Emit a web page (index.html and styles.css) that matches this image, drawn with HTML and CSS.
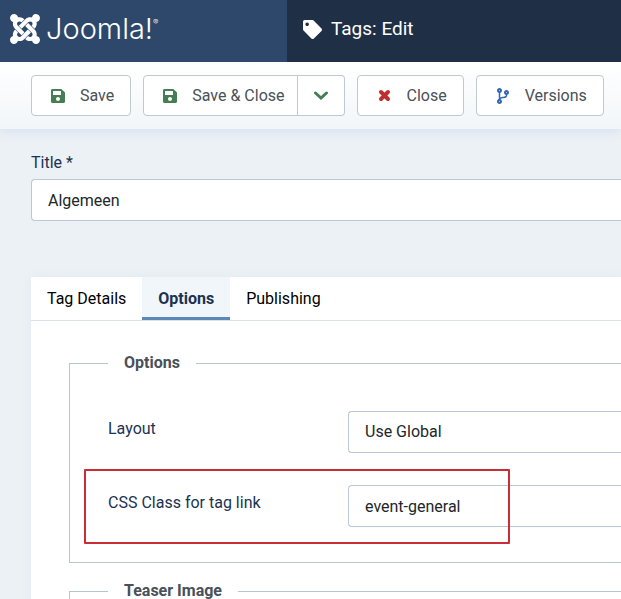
FILE: index.html
```html
<!DOCTYPE html>
<html lang="en">
<head>
<meta charset="utf-8">
<meta name="viewport" content="width=device-width, initial-scale=1">
<title>Tags: Edit</title>
<link rel="stylesheet" href="styles.css">
</head>
<body>
<div class="page">
  <header class="header">
    <a class="brand" href="#">
      <svg class="brand-mark" viewBox="0 32 448 448" aria-hidden="true"><path d="M.6 92.1C.6 58.8 27.4 32 60.4 32c30 0 54.5 21.9 59.2 50.2 32.6-7.6 67.1.6 96.5 30l-44.3 44.3c-20.5-20.5-42.6-16.3-55.4-3.5-14.3 14.3-14.3 37.9 0 52.2l99.5 99.5-44 44.3c-87.7-87.2-49.7-49.7-99.8-99.7-26.8-26.5-35-64.8-24.8-98.9C20.4 144.6.6 120.7.6 92.1zm129.5 116.4l44.3 44.3c10-10 89.7-89.7 99.7-99.8 14.3-14.3 37.6-14.3 51.9 0 12.8 12.8 17 35-3.5 55.4l44 44.3c31.2-31.2 38.5-67.6 28.9-101.2 29.2-4.1 51.9-29.2 51.9-59.5 0-33.2-26.8-60.1-59.8-60.1-30.3 0-55.4 22.5-59.5 51.6-33.8-9.9-71.7-1.5-98.3 25.1-18.3 19.1-71.1 71.5-99.6 99.9zm266.3 152.2c8.2-32.7-.9-68.5-26.3-93.9-11.8-12.2 5 4.7-99.5-99.7l-44.3 44.3 99.7 99.7c14.3 14.3 14.3 37.6 0 51.9-12.8 12.8-35 17-55.4-3.5l-44 44.3c27.6 30.2 68 38.8 102.7 28 5.5 27.4 29.7 48.1 58.9 48.1 33 0 59.8-26.8 59.8-60.1 0-30.2-22.5-55-51.6-59.1zm-84.3-53.1l-44-44.3c-87 86.4-50.4 50.4-99.7 99.8-14.3 14.3-37.6 14.3-51.9 0-13.1-13.4-16.9-35.3 3.2-55.4l-44-44.3c-30.2 30.2-38 65.2-29.5 98.3-26.7 6-46.2 29.9-46.2 58.2C0 453.2 26.8 480 59.8 480c28.6 0 52.5-19.8 58.6-46.7 32.7 8.2 68.5-.6 94.2-26 32.1-32 12.2-12.4 99.5-99.7z"/></svg>
      <span class="brand-name">Joomla!<span class="brand-reg">®</span></span>
    </a>
    <h1 class="page-title">
      <svg class="title-icon" viewBox="0 0 512 512" aria-hidden="true"><path d="M0 252.118V48C0 21.49 21.49 0 48 0h204.118a48 48 0 0 1 33.941 14.059l211.882 211.882c18.745 18.745 18.745 49.137 0 67.882L293.823 497.941c-18.745 18.745-49.137 18.745-67.882 0L14.059 286.059A48 48 0 0 1 0 252.118zM112 64c-26.51 0-48 21.49-48 48s21.49 48 48 48 48-21.49 48-48-21.49-48-48-48z"/></svg>
      Tags: Edit
    </h1>
  </header>

  <div class="toolbar" role="toolbar" aria-label="Actions">
    <button type="button" class="btn">
      <svg class="icon icon-save" viewBox="0 32 448 448" aria-hidden="true"><path d="M433.941 129.941l-83.882-83.882A48 48 0 0 0 316.118 32H48C21.49 32 0 53.49 0 80v352c0 26.51 21.49 48 48 48h352c26.51 0 48-21.49 48-48V163.882a48 48 0 0 0-14.059-33.941zM224 416c-35.346 0-64-28.654-64-64 0-35.346 28.654-64 64-64s64 28.654 64 64c0 35.346-28.654 64-64 64zm96-304.52V212c0 6.627-5.373 12-12 12H76c-6.627 0-12-5.373-12-12V108c0-6.627 5.373-12 12-12h228.52c3.183 0 6.235 1.264 8.485 3.515l3.48 3.48A11.996 11.996 0 0 1 320 111.48z"/></svg>
      Save
    </button>
    <div class="btn-group">
      <button type="button" class="btn">
        <svg class="icon icon-save" viewBox="0 32 448 448" aria-hidden="true"><path d="M433.941 129.941l-83.882-83.882A48 48 0 0 0 316.118 32H48C21.49 32 0 53.49 0 80v352c0 26.51 21.49 48 48 48h352c26.51 0 48-21.49 48-48V163.882a48 48 0 0 0-14.059-33.941zM224 416c-35.346 0-64-28.654-64-64 0-35.346 28.654-64 64-64s64 28.654 64 64c0 35.346-28.654 64-64 64zm96-304.52V212c0 6.627-5.373 12-12 12H76c-6.627 0-12-5.373-12-12V108c0-6.627 5.373-12 12-12h228.52c3.183 0 6.235 1.264 8.485 3.515l3.48 3.48A11.996 11.996 0 0 1 320 111.48z"/></svg>
        Save &amp; Close
      </button>
      <button type="button" class="btn btn-toggle" aria-label="More save actions">
        <svg class="icon-chevron" viewBox="0 0 14 14" aria-hidden="true"><path d="M1.500 4 7 9l5.500-5"/></svg>
      </button>
    </div>
    <button type="button" class="btn">
      <svg class="icon icon-close" viewBox="0 0 15 16" aria-hidden="true"><path d="M4 4l7 7M11 4l-7 7"/></svg>
      Close
    </button>
    <button type="button" class="btn">
      <svg class="icon icon-branch" viewBox="0 0 384 512" aria-hidden="true"><path d="M384 144c0-44.200-35.800-80-80-80s-80 35.800-80 80c0 36.400 24.300 67.100 57.500 76.800-.6 16.100-4.200 28.500-11 36.900-15.400 19.200-49.300 22.400-85.200 25.700-28.200 2.600-57.400 5.400-81.300 16.900v-144c32.500-10.200 56-40.500 56-76.300 0-44.200-35.800-80-80-80S0 35.800 0 80c0 35.800 23.500 66.100 56 76.300v199.300C23.500 365.900 0 396.200 0 432c0 44.200 35.800 80 80 80s80-35.800 80-80c0-34-21.200-63.100-51.200-74.600 3.100-5.200 7.800-9.800 14.900-13.400 16.200-8.200 40.400-10.400 66.100-12.800 42.200-3.900 90-8.400 118.200-43.400 14-17.400 21.100-39.800 21.600-67.900 31.600-10.800 54.400-40.700 54.400-75.900zM80 64c8.800 0 16 7.200 16 16s-7.200 16-16 16-16-7.200-16-16 7.200-16 16-16zm0 384c-8.800 0-16-7.200-16-16s7.200-16 16-16 16 7.200 16 16-7.200 16-16 16zm224-320c8.800 0 16 7.200 16 16s-7.200 16-16 16-16-7.200-16-16 7.200-16 16-16z"/></svg>
      Versions
    </button>
  </div>

  <main class="content">
    <div class="title-field">
      <label for="title">Title *</label>
      <input class="control" id="title" type="text" value="Algemeen">
    </div>

    <section class="card">
      <div class="tabs" role="tablist">
        <button type="button" class="tab" role="tab" aria-selected="false">Tag Details</button>
        <button type="button" class="tab tab-active" role="tab" aria-selected="true">Options</button>
        <button type="button" class="tab" role="tab" aria-selected="false">Publishing</button>
      </div>
      <div class="panel" role="tabpanel">
        <fieldset class="group">
          <legend>Options</legend>
          <div class="row">
            <label for="layout">Layout</label>
            <select class="control" id="layout"><option>Use Global</option></select>
          </div>
          <div class="row row-marked">
            <label for="css-class">CSS Class for tag link</label>
            <input class="control" id="css-class" type="text" value="event-general">
          </div>
        </fieldset>
        <fieldset class="group">
          <legend>Teaser Image</legend>
        </fieldset>
      </div>
    </section>
  </main>
</div>
</body>
</html>
```
FILE: styles.css
```css
*,
*::after {
  box-sizing: border-box;
}

body {
  margin: 0;
  font: 16px/24px Roboto, "Liberation Sans", sans-serif;
  color: #22262a;
  background: #ebf1f5;
}

button,
input,
select {
  margin: 0;
  font: inherit;
  color: inherit;
}

.page {
  height: 100vh;
  overflow: hidden;
}

/* Header */
.header {
  position: relative;
  z-index: 1;
  display: flex;
  height: 62px;
  color: #fff;
  background: #1f2f46;
}

.brand {
  display: flex;
  flex: 0 0 287px;
  align-items: center;
  gap: 6px;
  padding: 0 10px 4px;
  color: #fff;
  text-decoration: none;
  background: #2d486b;
}

.brand-mark {
  width: 30px;
  height: 30px;
  fill: currentColor;
}

.brand-name {
  display: flex;
  font: 300 29px/30px Inter, sans-serif;
}

.brand-reg {
  font-size: 8px;
  line-height: 16px;
}

.page-title {
  display: flex;
  align-items: center;
  gap: 9px;
  margin: 0;
  padding: 0 16px 4px;
  font-size: 19px;
  font-weight: 400;
}

.title-icon {
  width: 19px;
  height: 19px;
  fill: currentColor;
}

/* Toolbar */
.toolbar {
  position: relative;
  display: flex;
  gap: 12px;
  padding: 13px 0 13px 31px;
  background: linear-gradient(#fff, #f2f6f9);
  box-shadow: 0 2px 10px #d5dff0;
}

.btn {
  display: flex;
  align-items: center;
  gap: 15px;
  height: 41px;
  padding: 0 16px 0 19px;
  color: #495057;
  white-space: nowrap;
  background: #fff;
  border: 1px solid #c0c8d2;
  border-radius: 4px;
}

.btn-group {
  display: flex;
}

.btn-group .btn:first-child {
  padding-right: 12px;
  border-radius: 4px 0 0 4px;
}

.btn-group .btn-toggle {
  padding: 0 16px;
  border-left: 0;
  border-radius: 0 4px 4px 0;
}

.icon {
  width: 14px;
  height: 16px;
}

.icon-save {
  fill: #457d54;
}

.icon-close,
.icon-chevron {
  fill: none;
  stroke-linecap: round;
}

.icon-close {
  width: 15px;
  stroke: #c02f2f;
  stroke-width: 4;
}

.icon-chevron {
  width: 14px;
  height: 14px;
  stroke: #457d54;
  stroke-width: 3;
}

.icon-branch {
  fill: #3268ad;
}

/* Form */
.content {
  padding: 22px 0 0 31px;
}

label {
  color: #1b3251;
}

.control {
  display: block;
  width: 100%;
  height: 42px;
  padding: 0 16px;
  appearance: none;
  background: #fff;
  border: 1px solid #b9c7d8;
  border-right: 0;
  border-radius: 4px 0 0 4px;
}

.title-field {
  display: grid;
  gap: 4px;
}

.card {
  margin-top: 56px;
  background: #fff;
  box-shadow: 0 0 8px #e3eaf1;
}

.tabs {
  display: flex;
  height: 44px;
  border-bottom: 1px solid #d9e0e7;
}

.tab {
  padding: 0 16px;
  color: #000;
  background: none;
  border: 0;
}

.tab-active {
  font-weight: 700;
  color: #1b3251;
  background: #f1f6fa;
  box-shadow: inset 0 -3px #5a89b9;
}

.panel {
  display: grid;
  gap: 16px;
  padding: 30px 0 0 38px;
}

.group {
  display: grid;
  gap: 32px;
  min-width: 0;
  margin: 0;
  padding: 36px 0 35px 38px;
  border: 1px solid #b7c5cf;
  border-right: 0;
}

legend {
  padding: 0 16px;
  font-weight: 700;
  color: #495057;
}

.row {
  display: grid;
  grid-template-columns: 240px 1fr;
}

.row label {
  padding-top: 6px;
}

/* Highlight frame drawn over the field */
.row-marked {
  position: relative;
}

.row-marked::after {
  position: absolute;
  top: -16px;
  left: -24px;
  width: 426px;
  height: 75px;
  content: "";
  pointer-events: none;
  border: 2px solid #ca2d35;
  border-radius: 1px;
}
```
